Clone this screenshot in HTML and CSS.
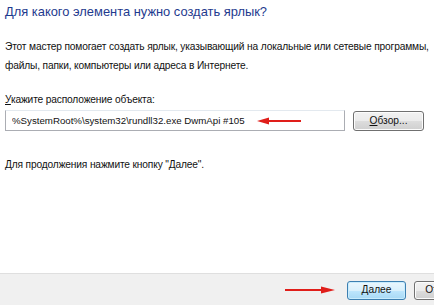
FILE: index.html
```html
<!doctype html>
<html>
<head>
  <title>Создание ярлыка</title>
  <meta charset='UTF-8'>
  <link rel="stylesheet" href="styles.css">
</head>
<body>
  <main class="wizard">
    <section class="content">
      <h1>Для какого элемента нужно создать ярлык?</h1>
      <p class="intro">Этот мастер помогает создать ярлык, указывающий на локальные или сетевые программы, файлы, папки, компьютеры или адреса в Интернете.</p>
      <label class="field-label" for="target"><u>У</u>кажите расположение объекта:</label>
      <div class="field-row">
        <div class="path-box">
          <input type="text" id="target" value="%SystemRoot%\system32\rundll32.exe DwmApi #105">
          <svg class="arrow arrow-left" width="46" height="8" viewBox="0 0 46 8">
            <path d="M10 4H44" stroke="#e01e1a" stroke-width="2.2"/>
            <path d="M0 4L12 0.5V7.5Z" fill="#e01e1a"/>
          </svg>
        </div>
        <button class="button"><u>О</u>бзор...</button>
      </div>
      <p class="hint">Для продолжения нажмите кнопку "Далее".</p>
    </section>
    <footer class="actions">
      <svg class="arrow" width="50" height="8" viewBox="0 0 50 8">
        <path d="M0 4H38" stroke="#e01e1a" stroke-width="2.2"/>
        <path d="M50 4L36 0.5V7.5Z" fill="#e01e1a"/>
      </svg>
      <button class="button default"><u>Д</u>алее</button>
      <button class="button">Отмена</button>
    </footer>
  </main>
</body>
</html>
```

FILE: styles.css
```css
html, body { height: 100% }
body {
  margin: 0;
  background: #fff;
  color: #111;
  font: 10.2px/19px "Liberation Sans", "DejaVu Sans", sans-serif;
  letter-spacing: -0.15px;
  overflow: hidden }
.wizard {
  display: flex;
  flex-flow: column;
  width: 434px;
  height: 305px }
.content {
  flex: 1;
  padding: 3px 0 0 5px }
  h1 {
    margin: 0;
    font-weight: normal;
    font-size: 12.9px;
    line-height: 18px;
    letter-spacing: 0;
    color: #1e3a8e }
  p { margin: 0 }
  .intro {
    margin-top: 16px;
    width: 432px }
  .field-label {
    display: block;
    margin-top: 15px }
  .field-row {
    display: flex;
    align-items: center;
    gap: 8px;
    margin-top: 1px }
    .path-box {
      position: relative;
      display: flex }
    #target {
      width: 332px;
      height: 19px;
      margin: 0;
      padding: 0 0 0 6px;
      border: 1px solid #abadb3;
      border-top-color: #e3e9ef;
      font: 9.7px/19px "Liberation Sans", sans-serif;
      letter-spacing: 0;
      color: #111 }
    .arrow-left {
      position: absolute;
      left: 252px;
      top: 7px }
  .hint { margin-top: 24px }
.button {
  height: 20px;
  padding: 0;
  font: inherit;
  line-height: 16px;
  color: #111;
  border: 1px solid #707070;
  border-radius: 3px;
  background: linear-gradient(#f2f2f2 0, #ebebeb 50%, #dddddd 51%, #cfcfcf 100%);
  box-shadow: inset 0 0 0 1px #fcfcfc }
.field-row .button { width: 71px }
.actions {
  display: flex;
  align-items: center;
  height: 30px;
  padding: 1px 0 0 285px;
  border-top: 1px solid #dfdfdf;
  background: #f0f0f0;
  overflow: hidden }
  .actions > * { flex: none }
  .actions .arrow { margin-right: 12px }
  .actions .button {
    width: 59px;
    height: 19px;
    margin-right: 8px }
  .button.default {
    border-color: #3c7fb1;
    background: linear-gradient(#eaf6fd 0, #d9f0fc 50%, #bee6fd 51%, #a7d9f5 100%);
    box-shadow: inset 0 0 0 1px #c9ecfd }
```
